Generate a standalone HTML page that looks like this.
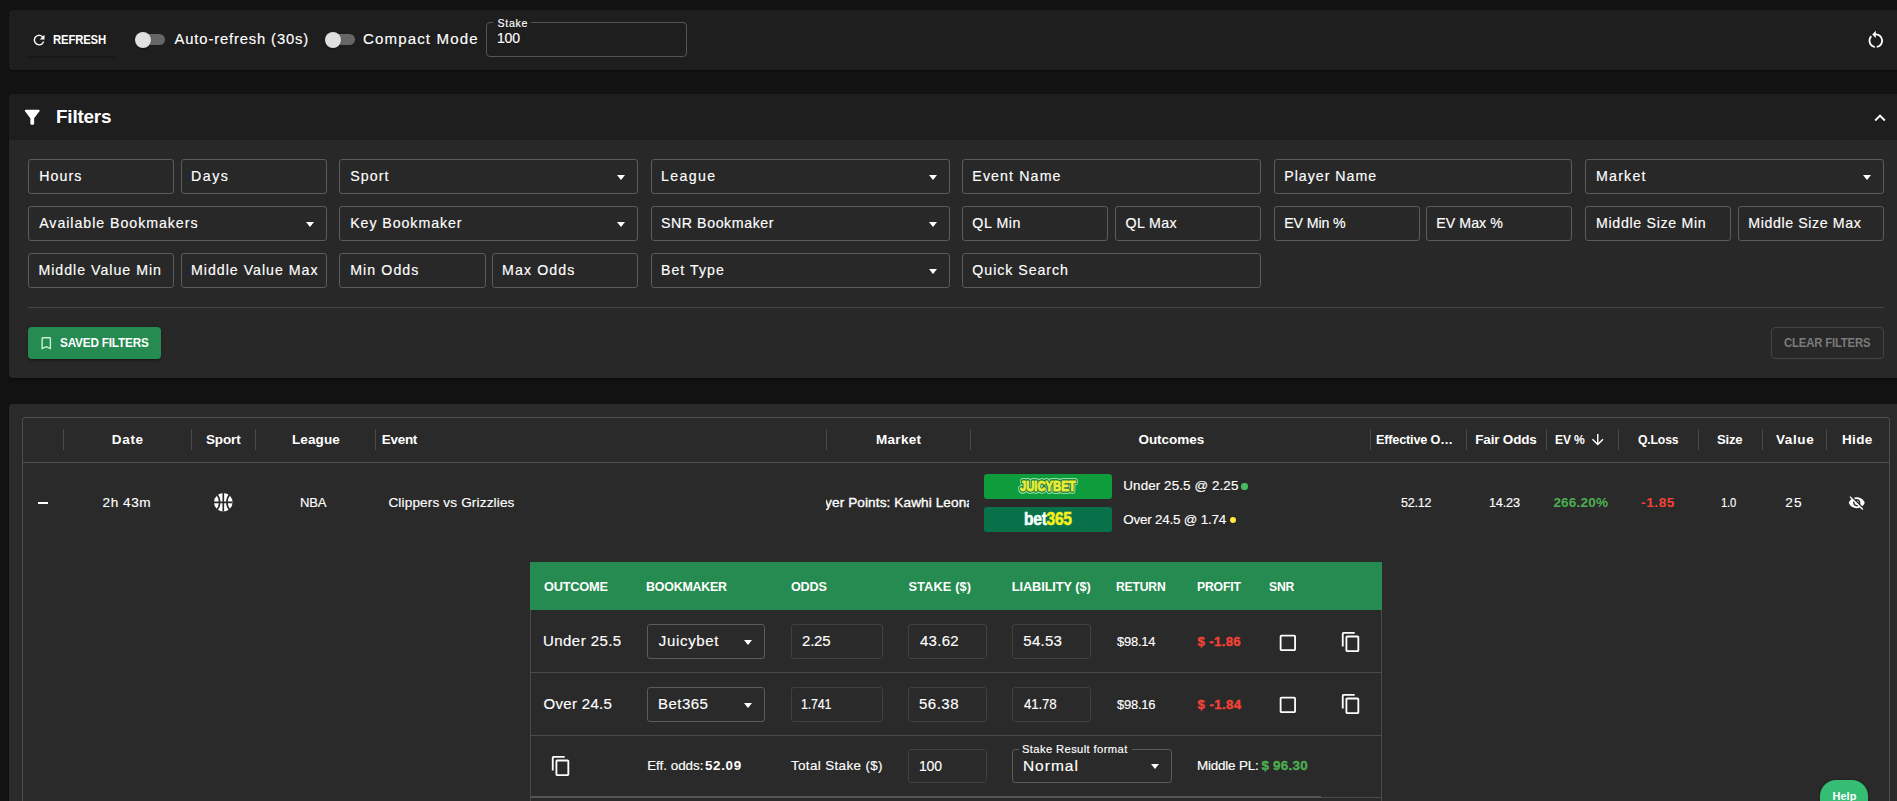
<!DOCTYPE html>
<html><head><meta charset="utf-8"><style>
html,body{margin:0;padding:0;}
body{width:1897px;height:801px;overflow:hidden;background:#121212;position:relative;font-family:"Liberation Sans",sans-serif;}
.b{position:absolute;}
.i{position:absolute;overflow:visible;}
.t{position:absolute;white-space:nowrap;line-height:1;transform-origin:0 0;}
.tri{position:absolute;width:0;height:0;border-left:4.5px solid transparent;border-right:4.5px solid transparent;border-top:5px solid #fff;}
</style></head><body>
<div class="b" style="left:9px;top:10px;width:1900px;height:60px;background:#1e1e1e;border-radius:4px;box-shadow:0 2px 1px -1px rgba(0,0,0,.2),0 1px 1px 0 rgba(0,0,0,.14),0 1px 3px 0 rgba(0,0,0,.12);"></div>
<div class="b" style="left:25px;top:23px;width:92px;height:33px;border-radius:4px;box-shadow:0 2px 2px -1px rgba(0,0,0,.35);"></div>
<svg class="i" style="left:31.1px;top:31.6px" width="16.2" height="16.2" viewBox="0 0 24 24"><path fill="#fff" d="M17.65 6.35C16.2 4.9 14.21 4 12 4c-4.42 0-7.99 3.58-7.99 8s3.57 8 7.99 8c3.73 0 6.84-2.55 7.73-6h-2.08c-.82 2.33-3.04 4-5.65 4-3.31 0-6-2.69-6-6s2.69-6 6-6c1.66 0 3.14.69 4.22 1.78L13 11h7V4l-2.35 2.35z"/></svg>
<div class="b" style="left:138px;top:34px;width:27px;height:11px;background:#666;border-radius:5.5px;"></div>
<div class="b" style="left:135px;top:32px;width:16px;height:16px;background:#e0e0e0;border-radius:50%;box-shadow:0 2px 1px -1px rgba(0,0,0,.2),0 1px 1px 0 rgba(0,0,0,.14),0 1px 3px 0 rgba(0,0,0,.12);"></div>
<div class="b" style="left:328px;top:34px;width:27px;height:11px;background:#666;border-radius:5.5px;"></div>
<div class="b" style="left:325px;top:32px;width:16px;height:16px;background:#e0e0e0;border-radius:50%;box-shadow:0 2px 1px -1px rgba(0,0,0,.2),0 1px 1px 0 rgba(0,0,0,.14),0 1px 3px 0 rgba(0,0,0,.12);"></div>
<div class="b" style="left:486px;top:22px;width:201px;height:35px;border:1px solid #555;border-radius:4px;box-sizing:border-box;"></div>
<div class="b" style="left:493px;top:20px;width:38px;height:4px;background:#1e1e1e;"></div>
<svg class="i" style="left:1864.8px;top:29px" width="21.6" height="21.6" viewBox="0 0 24 24"><path fill="#fff" d="M12 5V2L8 6l4 4V7c3.31 0 6 2.69 6 6 0 2.97-2.17 5.43-5 5.91v2.02c3.95-.49 7-3.85 7-7.93 0-4.42-3.58-8-8-8zm-6 8c0-1.65.67-3.15 1.76-4.24L6.34 7.34C4.9 8.79 4 10.79 4 13c0 4.08 3.05 7.44 7 7.93v-2.02c-2.83-.48-5-2.94-5-5.91z"/></svg>
<div class="b" style="left:9px;top:94px;width:1900px;height:284px;background:#282828;border-radius:4px;overflow:hidden;box-shadow:0 2px 1px -1px rgba(0,0,0,.2),0 1px 1px 0 rgba(0,0,0,.14),0 1px 3px 0 rgba(0,0,0,.12);"></div>
<div class="b" style="left:9px;top:94px;width:1900px;height:46px;background:#1e1e1e;border-radius:4px 4px 0 0;"></div>
<svg class="i" style="left:21.45px;top:106.25px" width="22.5" height="22.5" viewBox="0 0 24 24"><path fill="#fff" d="M4.25 5.61C6.27 8.2 10 13 10 13v6c0 .55.45 1 1 1h2c.55 0 1-.45 1-1v-6s3.72-4.8 5.74-7.39c.51-.66.04-1.61-.79-1.61H5.04c-.83 0-1.3.95-.79 1.61z"/></svg>
<svg class="i" style="left:1868.9px;top:106.7px" width="22" height="22" viewBox="0 0 24 24"><path fill="#fff" d="m12 8-6 6 1.41 1.41L12 10.83l4.59 4.58L18 14z"/></svg>
<div class="b" style="left:28px;top:159px;width:146px;height:35px;border:1px solid #5b5b5b;border-radius:3px;box-sizing:border-box;"></div>
<div class="b" style="left:181px;top:159px;width:146px;height:35px;border:1px solid #5b5b5b;border-radius:3px;box-sizing:border-box;"></div>
<div class="b" style="left:339px;top:159px;width:299px;height:35px;border:1px solid #5b5b5b;border-radius:3px;box-sizing:border-box;"></div>
<div class="tri" style="left:616.5px;top:174.5px"></div>
<div class="b" style="left:651px;top:159px;width:299px;height:35px;border:1px solid #5b5b5b;border-radius:3px;box-sizing:border-box;"></div>
<div class="tri" style="left:928.5px;top:174.5px"></div>
<div class="b" style="left:962px;top:159px;width:299px;height:35px;border:1px solid #5b5b5b;border-radius:3px;box-sizing:border-box;"></div>
<div class="b" style="left:1274px;top:159px;width:298px;height:35px;border:1px solid #5b5b5b;border-radius:3px;box-sizing:border-box;"></div>
<div class="b" style="left:1585px;top:159px;width:299px;height:35px;border:1px solid #5b5b5b;border-radius:3px;box-sizing:border-box;"></div>
<div class="tri" style="left:1862.5px;top:174.5px"></div>
<div class="b" style="left:28px;top:206px;width:299px;height:35px;border:1px solid #5b5b5b;border-radius:3px;box-sizing:border-box;"></div>
<div class="tri" style="left:305.5px;top:221.5px"></div>
<div class="b" style="left:339px;top:206px;width:299px;height:35px;border:1px solid #5b5b5b;border-radius:3px;box-sizing:border-box;"></div>
<div class="tri" style="left:616.5px;top:221.5px"></div>
<div class="b" style="left:651px;top:206px;width:299px;height:35px;border:1px solid #5b5b5b;border-radius:3px;box-sizing:border-box;"></div>
<div class="tri" style="left:928.5px;top:221.5px"></div>
<div class="b" style="left:962px;top:206px;width:146px;height:35px;border:1px solid #5b5b5b;border-radius:3px;box-sizing:border-box;"></div>
<div class="b" style="left:1115px;top:206px;width:146px;height:35px;border:1px solid #5b5b5b;border-radius:3px;box-sizing:border-box;"></div>
<div class="b" style="left:1274px;top:206px;width:146px;height:35px;border:1px solid #5b5b5b;border-radius:3px;box-sizing:border-box;"></div>
<div class="b" style="left:1426px;top:206px;width:146px;height:35px;border:1px solid #5b5b5b;border-radius:3px;box-sizing:border-box;"></div>
<div class="b" style="left:1585px;top:206px;width:146px;height:35px;border:1px solid #5b5b5b;border-radius:3px;box-sizing:border-box;"></div>
<div class="b" style="left:1738px;top:206px;width:146px;height:35px;border:1px solid #5b5b5b;border-radius:3px;box-sizing:border-box;"></div>
<div class="b" style="left:28px;top:253px;width:146px;height:35px;border:1px solid #5b5b5b;border-radius:3px;box-sizing:border-box;"></div>
<div class="b" style="left:181px;top:253px;width:146px;height:35px;border:1px solid #5b5b5b;border-radius:3px;box-sizing:border-box;"></div>
<div class="b" style="left:339px;top:253px;width:147px;height:35px;border:1px solid #5b5b5b;border-radius:3px;box-sizing:border-box;"></div>
<div class="b" style="left:492px;top:253px;width:146px;height:35px;border:1px solid #5b5b5b;border-radius:3px;box-sizing:border-box;"></div>
<div class="b" style="left:651px;top:253px;width:299px;height:35px;border:1px solid #5b5b5b;border-radius:3px;box-sizing:border-box;"></div>
<div class="tri" style="left:928.5px;top:268.5px"></div>
<div class="b" style="left:962px;top:253px;width:299px;height:35px;border:1px solid #5b5b5b;border-radius:3px;box-sizing:border-box;"></div>
<div class="b" style="left:28px;top:307px;width:1856px;height:1px;background:#474747;"></div>
<div class="b" style="left:28px;top:327px;width:133px;height:32px;background:#258b51;border-radius:4px;box-shadow:0 3px 1px -2px rgba(0,0,0,.2),0 2px 2px 0 rgba(0,0,0,.14),0 1px 5px 0 rgba(0,0,0,.12);"></div>
<svg class="i" style="left:37.56px;top:334.94px" width="16.5" height="16.5" viewBox="0 0 24 24"><path fill="#c9f3d4" d="M17 3H7c-1.1 0-1.99.9-1.99 2L5 21l7-3 7 3V5c0-1.1-.9-2-2-2zm0 15-5-2.18L7 18V5h10v13z"/></svg>
<div class="b" style="left:1771px;top:327px;width:113px;height:32px;border:1px solid #444;border-radius:4px;box-sizing:border-box;"></div>
<div class="b" style="left:9px;top:404px;width:1900px;height:420px;background:#2a2a2a;border-radius:4px;box-shadow:0 2px 1px -1px rgba(0,0,0,.2),0 1px 1px 0 rgba(0,0,0,.14),0 1px 3px 0 rgba(0,0,0,.12);"></div>
<div class="b" style="left:22px;top:417px;width:1868px;height:420px;border:1px solid #4e4e4e;border-radius:3px;box-sizing:border-box;"></div>
<div class="b" style="left:22px;top:462px;width:1868px;height:1px;background:#4e4e4e;"></div>
<div class="b" style="left:63px;top:429px;width:1px;height:21px;background:#4a4a4a;"></div>
<div class="b" style="left:191px;top:429px;width:1px;height:21px;background:#4a4a4a;"></div>
<div class="b" style="left:255px;top:429px;width:1px;height:21px;background:#4a4a4a;"></div>
<div class="b" style="left:375px;top:429px;width:1px;height:21px;background:#4a4a4a;"></div>
<div class="b" style="left:826px;top:429px;width:1px;height:21px;background:#4a4a4a;"></div>
<div class="b" style="left:970px;top:429px;width:1px;height:21px;background:#4a4a4a;"></div>
<div class="b" style="left:1370px;top:429px;width:1px;height:21px;background:#4a4a4a;"></div>
<div class="b" style="left:1466px;top:429px;width:1px;height:21px;background:#4a4a4a;"></div>
<div class="b" style="left:1546px;top:429px;width:1px;height:21px;background:#4a4a4a;"></div>
<div class="b" style="left:1618px;top:429px;width:1px;height:21px;background:#4a4a4a;"></div>
<div class="b" style="left:1698px;top:429px;width:1px;height:21px;background:#4a4a4a;"></div>
<div class="b" style="left:1762px;top:429px;width:1px;height:21px;background:#4a4a4a;"></div>
<div class="b" style="left:1826px;top:429px;width:1px;height:21px;background:#4a4a4a;"></div>
<svg class="i" style="left:1589.1px;top:430.9px" width="17.5" height="17.5" viewBox="0 0 24 24"><path fill="#fff" d="M20 12l-1.41-1.41L13 16.17V4h-2v12.17l-5.58-5.59L4 12l8 8 8-8z"/></svg>
<div class="b" style="left:38px;top:502px;width:10px;height:2px;background:#fff;"></div>
<svg class="i" style="left:213.5px;top:493.1px" width="18.6" height="18.6" viewBox="0 0 20 20"><circle cx="10" cy="10" r="10" fill="#fff"/><g fill="none" stroke="#2a2a2a" stroke-width="1.8"><path d="M10 0V20M0 10H20"/><path d="M3 2.2C7 5 7 15 3 17.8"/><path d="M17 2.2C13 5 13 15 17 17.8"/></g></svg>
<div class="b" style="left:826px;top:490px;width:143px;height:24px;overflow:hidden"><span class="t" style="left:-0.9px;top:6.1px;font-size:13.6px;letter-spacing:0.1px;-webkit-text-stroke:0.35px #fff;color:#fff">yer Points: Kawhi Leonard</span></div>
<div class="b" style="left:984px;top:474px;width:128px;height:25px;background:#0f9c3d;border-radius:3px;"></div>
<svg class="i" style="left:1012px;top:474px" width="72" height="25" viewBox="0 0 72 25"><g font-family="Liberation Sans" font-weight="bold" font-size="14.6" stroke-linejoin="round"><text x="8" y="17.0" textLength="55.6" lengthAdjust="spacingAndGlyphs" fill="#9ff0b4" stroke="#9ff0b4" stroke-width="5.4">JUICYBET</text><text x="8" y="17.0" textLength="55.6" lengthAdjust="spacingAndGlyphs" fill="#0a6a2a" stroke="#0a6a2a" stroke-width="3.3">JUICYBET</text><text x="8" y="17.0" textLength="55.6" lengthAdjust="spacingAndGlyphs" fill="#e9ec3a" stroke="#e9ec3a" stroke-width="1.1">JUICYBET</text></g></svg>
<div class="b" style="left:984px;top:507px;width:128px;height:25px;background:#08714a;border-radius:3px;"></div>
<span class="t" style="left:1023.5px;top:510.6px;font-size:17.7px;font-weight:bold;color:#f4fffa;letter-spacing:-0.3px;transform:scaleX(0.88);-webkit-text-stroke:0.6px currentColor">bet<span style="color:#f5ef1e">365</span></span>
<div class="b" style="left:1241.3px;top:483.3px;width:6.4px;height:6.4px;background:#43bd5e;border-radius:50%;"></div>
<div class="b" style="left:1229.9px;top:516.6px;width:6.4px;height:6.4px;background:#ffeb3b;border-radius:50%;"></div>
<svg class="i" style="left:1848.3px;top:493.8px" width="17.5" height="17.5" viewBox="0 0 24 24"><path fill="#fff" d="M12 7c2.76 0 5 2.24 5 5 0 .65-.13 1.26-.36 1.83l2.92 2.92c1.51-1.26 2.7-2.89 3.43-4.75-1.73-4.39-6-7.5-11-7.5-1.4 0-2.74.25-3.98.7l2.16 2.16C10.74 7.13 11.35 7 12 7zM2 4.27l2.28 2.28.46.46C3.08 8.3 1.78 10.02 1 12c1.73 4.39 6 7.5 11 7.5 1.55 0 3.03-.3 4.38-.84l.42.42L19.73 22 21 20.73 3.27 3 2 4.27zM7.53 9.8l1.55 1.55c-.05.21-.08.43-.08.65 0 1.66 1.34 3 3 3 .22 0 .44-.03.65-.08l1.55 1.55c-.67.33-1.41.53-2.2.53-2.76 0-5-2.24-5-5 0-.79.2-1.53.53-2.2zm4.31-.78 3.15 3.15.02-.16c0-1.66-1.34-3-3-3l-.17.01z"/></svg>
<div class="b" style="left:530px;top:562px;width:852px;height:240px;border:1px solid #4a4a4a;border-top:none;box-sizing:border-box;"></div>
<div class="b" style="left:530px;top:562px;width:852px;height:48px;background:#268b50;"></div>
<div class="b" style="left:531px;top:672px;width:850px;height:1px;background:#4a4a4a;"></div>
<div class="b" style="left:531px;top:735px;width:850px;height:1px;background:#4a4a4a;"></div>
<div class="b" style="left:531px;top:796px;width:790px;height:2px;background:#555;"></div>
<div class="b" style="left:1321px;top:797px;width:60px;height:1px;background:#4a4a4a;"></div>
<div class="b" style="left:647px;top:624px;width:118px;height:35px;border:1px solid #5b5b5b;border-radius:3px;box-sizing:border-box;"></div>
<div class="tri" style="left:743.8px;top:639.5px"></div>
<div class="b" style="left:791px;top:624px;width:92px;height:35px;border:1px solid #404040;border-radius:3px;box-sizing:border-box;"></div>
<div class="b" style="left:908px;top:624px;width:79px;height:35px;border:1px solid #404040;border-radius:3px;box-sizing:border-box;"></div>
<div class="b" style="left:1012px;top:624px;width:79px;height:35px;border:1px solid #404040;border-radius:3px;box-sizing:border-box;"></div>
<div class="b" style="left:647px;top:687px;width:118px;height:35px;border:1px solid #5b5b5b;border-radius:3px;box-sizing:border-box;"></div>
<div class="tri" style="left:743.8px;top:702.5px"></div>
<div class="b" style="left:791px;top:687px;width:92px;height:35px;border:1px solid #404040;border-radius:3px;box-sizing:border-box;"></div>
<div class="b" style="left:908px;top:687px;width:79px;height:35px;border:1px solid #404040;border-radius:3px;box-sizing:border-box;"></div>
<div class="b" style="left:1012px;top:687px;width:79px;height:35px;border:1px solid #404040;border-radius:3px;box-sizing:border-box;"></div>
<svg class="i" style="left:1276.9px;top:631.5px" width="21.7" height="21.7" viewBox="0 0 24 24"><path fill="#fff" d="M19 5v14H5V5h14m0-2H5c-1.1 0-2 .9-2 2v14c0 1.1.9 2 2 2h14c1.1 0 2-.9 2-2V5c0-1.1-.9-2-2-2z"/></svg>
<svg class="i" style="left:1340px;top:631px" width="22" height="22" viewBox="0 0 24 24"><path fill="#fff" d="M16 1H4c-1.1 0-2 .9-2 2v14h2V3h12V1zm3 4H8c-1.1 0-2 .9-2 2v14c0 1.1.9 2 2 2h11c1.1 0 2-.9 2-2V7c0-1.1-.9-2-2-2zm0 16H8V7h11v14z"/></svg>
<svg class="i" style="left:1276.9px;top:693.5px" width="21.7" height="21.7" viewBox="0 0 24 24"><path fill="#fff" d="M19 5v14H5V5h14m0-2H5c-1.1 0-2 .9-2 2v14c0 1.1.9 2 2 2h14c1.1 0 2-.9 2-2V5c0-1.1-.9-2-2-2z"/></svg>
<svg class="i" style="left:1340px;top:693px" width="22" height="22" viewBox="0 0 24 24"><path fill="#fff" d="M16 1H4c-1.1 0-2 .9-2 2v14h2V3h12V1zm3 4H8c-1.1 0-2 .9-2 2v14c0 1.1.9 2 2 2h11c1.1 0 2-.9 2-2V7c0-1.1-.9-2-2-2zm0 16H8V7h11v14z"/></svg>
<svg class="i" style="left:549.9px;top:755.1px" width="22" height="22" viewBox="0 0 24 24"><path fill="#fff" d="M16 1H4c-1.1 0-2 .9-2 2v14h2V3h12V1zm3 4H8c-1.1 0-2 .9-2 2v14c0 1.1.9 2 2 2h11c1.1 0 2-.9 2-2V7c0-1.1-.9-2-2-2zm0 16H8V7h11v14z"/></svg>
<div class="b" style="left:908px;top:749px;width:79px;height:34px;border:1px solid #404040;border-radius:3px;box-sizing:border-box;"></div>
<div class="b" style="left:1012px;top:749px;width:160px;height:34px;border:1px solid #5b5b5b;border-radius:3px;box-sizing:border-box;"></div>
<div class="b" style="left:1019px;top:745px;width:113px;height:6px;background:#2a2a2a;"></div>
<div class="tri" style="left:1151px;top:764px"></div>
<div class="b" style="left:1820px;top:780px;width:48px;height:40px;background:#35bd74;border-radius:16px 16px 0 0;box-shadow:0 0 2px rgba(0,0,0,.6);"></div>
<span id="s0" class="t" style="left:52.70px;top:34.29px;font-size:12.90px;letter-spacing:-0.200px;transform:scaleX(0.8793);font-weight:bold;color:#ffffff;">REFRESH</span>
<span id="s1" class="t" style="left:174.60px;top:31.63px;font-size:14.78px;letter-spacing:0.859px;-webkit-text-stroke:0.15px currentColor;color:#ffffff;">Auto-refresh (30s)</span>
<span id="s2" class="t" style="left:363.00px;top:31.49px;font-size:15.07px;letter-spacing:1.127px;-webkit-text-stroke:0.15px currentColor;color:#ffffff;">Compact Mode</span>
<span id="s3" class="t" style="left:497.60px;top:17.99px;font-size:10.60px;letter-spacing:0.650px;-webkit-text-stroke:0.15px currentColor;color:#ffffff;">Stake</span>
<span id="s4" class="t" style="left:497.00px;top:30.28px;font-size:15.20px;letter-spacing:-0.200px;transform:scaleX(0.9243);-webkit-text-stroke:0.15px currentColor;color:#ffffff;">100</span>
<span id="s5" class="t" style="left:55.80px;top:107.92px;font-size:18.80px;letter-spacing:-0.200px;transform:scaleX(1.0057);font-weight:bold;color:#ffffff;">Filters</span>
<span id="s6" class="t" style="left:39.20px;top:168.93px;font-size:14.20px;letter-spacing:1.075px;-webkit-text-stroke:0.15px currentColor;color:#ffffff;">Hours</span>
<span id="s7" class="t" style="left:191.00px;top:168.93px;font-size:14.20px;letter-spacing:1.500px;-webkit-text-stroke:0.15px currentColor;color:#ffffff;">Days</span>
<span id="s8" class="t" style="left:350.20px;top:168.93px;font-size:14.20px;letter-spacing:1.100px;-webkit-text-stroke:0.15px currentColor;color:#ffffff;">Sport</span>
<span id="s9" class="t" style="left:660.90px;top:168.93px;font-size:14.20px;letter-spacing:1.400px;-webkit-text-stroke:0.15px currentColor;color:#ffffff;">League</span>
<span id="s10" class="t" style="left:972.30px;top:168.93px;font-size:14.20px;letter-spacing:1.122px;-webkit-text-stroke:0.15px currentColor;color:#ffffff;">Event Name</span>
<span id="s11" class="t" style="left:1284.20px;top:168.93px;font-size:14.20px;letter-spacing:0.990px;-webkit-text-stroke:0.15px currentColor;color:#ffffff;">Player Name</span>
<span id="s12" class="t" style="left:1596.00px;top:168.93px;font-size:14.20px;letter-spacing:1.220px;-webkit-text-stroke:0.15px currentColor;color:#ffffff;">Market</span>
<span id="s13" class="t" style="left:39.20px;top:215.93px;font-size:14.20px;letter-spacing:0.958px;-webkit-text-stroke:0.15px currentColor;color:#ffffff;">Available Bookmakers</span>
<span id="s14" class="t" style="left:350.20px;top:215.93px;font-size:14.20px;letter-spacing:0.933px;-webkit-text-stroke:0.15px currentColor;color:#ffffff;">Key Bookmaker</span>
<span id="s15" class="t" style="left:660.90px;top:215.93px;font-size:14.20px;letter-spacing:0.583px;-webkit-text-stroke:0.15px currentColor;color:#ffffff;">SNR Bookmaker</span>
<span id="s16" class="t" style="left:972.30px;top:215.93px;font-size:14.20px;letter-spacing:0.600px;-webkit-text-stroke:0.15px currentColor;color:#ffffff;">QL Min</span>
<span id="s17" class="t" style="left:1125.60px;top:215.93px;font-size:14.20px;letter-spacing:0.360px;-webkit-text-stroke:0.15px currentColor;color:#ffffff;">QL Max</span>
<span id="s18" class="t" style="left:1284.20px;top:215.93px;font-size:14.20px;letter-spacing:-0.114px;-webkit-text-stroke:0.15px currentColor;color:#ffffff;">EV Min %</span>
<span id="s19" class="t" style="left:1436.30px;top:215.93px;font-size:14.20px;letter-spacing:0.043px;-webkit-text-stroke:0.15px currentColor;color:#ffffff;">EV Max %</span>
<span id="s20" class="t" style="left:1596.00px;top:215.93px;font-size:14.20px;letter-spacing:0.679px;-webkit-text-stroke:0.15px currentColor;color:#ffffff;">Middle Size Min</span>
<span id="s21" class="t" style="left:1748.30px;top:215.93px;font-size:14.20px;letter-spacing:0.600px;-webkit-text-stroke:0.15px currentColor;color:#ffffff;">Middle Size Max</span>
<span id="s22" class="t" style="left:38.40px;top:262.93px;font-size:14.20px;letter-spacing:0.987px;-webkit-text-stroke:0.15px currentColor;color:#ffffff;">Middle Value Min</span>
<span id="s23" class="t" style="left:191.00px;top:262.93px;font-size:14.20px;letter-spacing:0.987px;-webkit-text-stroke:0.15px currentColor;color:#ffffff;">Middle Value Max</span>
<span id="s24" class="t" style="left:350.20px;top:262.93px;font-size:14.20px;letter-spacing:1.071px;-webkit-text-stroke:0.15px currentColor;color:#ffffff;">Min Odds</span>
<span id="s25" class="t" style="left:502.10px;top:262.93px;font-size:14.20px;letter-spacing:1.086px;-webkit-text-stroke:0.15px currentColor;color:#ffffff;">Max Odds</span>
<span id="s26" class="t" style="left:660.90px;top:262.93px;font-size:14.20px;letter-spacing:1.029px;-webkit-text-stroke:0.15px currentColor;color:#ffffff;">Bet Type</span>
<span id="s27" class="t" style="left:972.30px;top:262.93px;font-size:14.20px;letter-spacing:0.955px;-webkit-text-stroke:0.15px currentColor;color:#ffffff;">Quick Search</span>
<span id="s28" class="t" style="left:60.40px;top:336.76px;font-size:12.40px;letter-spacing:-0.200px;transform:scaleX(0.9493);font-weight:bold;color:#ffffff;">SAVED FILTERS</span>
<span id="s29" class="t" style="left:1784.20px;top:336.66px;font-size:12.40px;letter-spacing:-0.200px;transform:scaleX(0.9167);font-weight:bold;color:#7b7b7b;">CLEAR FILTERS</span>
<span id="s30" class="t" style="left:111.80px;top:432.82px;font-size:13.50px;letter-spacing:0.667px;font-weight:bold;color:#ffffff;">Date</span>
<span id="s31" class="t" style="left:206.00px;top:432.82px;font-size:13.50px;letter-spacing:-0.150px;font-weight:bold;color:#ffffff;">Sport</span>
<span id="s32" class="t" style="left:292.00px;top:432.82px;font-size:13.50px;letter-spacing:0.100px;font-weight:bold;color:#ffffff;">League</span>
<span id="s33" class="t" style="left:381.70px;top:432.82px;font-size:13.50px;letter-spacing:-0.275px;font-weight:bold;color:#ffffff;">Event</span>
<span id="s34" class="t" style="left:876.00px;top:432.82px;font-size:13.50px;letter-spacing:0.300px;font-weight:bold;color:#ffffff;">Market</span>
<span id="s35" class="t" style="left:1138.40px;top:432.82px;font-size:13.50px;letter-spacing:-0.014px;font-weight:bold;color:#ffffff;">Outcomes</span>
<span id="s36" class="t" style="left:1376.40px;top:432.82px;font-size:13.50px;letter-spacing:-0.200px;transform:scaleX(0.9398);font-weight:bold;color:#ffffff;">Effective O…</span>
<span id="s37" class="t" style="left:1475.30px;top:432.82px;font-size:13.50px;letter-spacing:-0.188px;font-weight:bold;color:#ffffff;">Fair Odds</span>
<span id="s38" class="t" style="left:1555.00px;top:432.82px;font-size:13.50px;letter-spacing:-0.200px;transform:scaleX(0.8951);font-weight:bold;color:#ffffff;">EV %</span>
<span id="s39" class="t" style="left:1638.20px;top:432.82px;font-size:13.50px;letter-spacing:-0.200px;transform:scaleX(0.9070);font-weight:bold;color:#ffffff;">Q.Loss</span>
<span id="s40" class="t" style="left:1717.00px;top:432.82px;font-size:13.50px;letter-spacing:-0.200px;transform:scaleX(0.9687);font-weight:bold;color:#ffffff;">Size</span>
<span id="s41" class="t" style="left:1776.00px;top:432.82px;font-size:13.50px;letter-spacing:0.600px;font-weight:bold;color:#ffffff;">Value</span>
<span id="s42" class="t" style="left:1842.00px;top:432.82px;font-size:13.50px;letter-spacing:0.333px;font-weight:bold;color:#ffffff;">Hide</span>
<span id="s43" class="t" style="left:102.60px;top:495.94px;font-size:13.60px;letter-spacing:0.520px;-webkit-text-stroke:0.15px currentColor;color:#ffffff;">2h 43m</span>
<span id="s44" class="t" style="left:300.00px;top:495.94px;font-size:13.60px;letter-spacing:-0.200px;transform:scaleX(0.9612);-webkit-text-stroke:0.15px currentColor;color:#ffffff;">NBA</span>
<span id="s45" class="t" style="left:388.40px;top:495.94px;font-size:13.60px;letter-spacing:0.145px;-webkit-text-stroke:0.15px currentColor;color:#ffffff;">Clippers vs Grizzlies</span>
<span id="s46" class="t" style="left:1401.30px;top:495.94px;font-size:13.60px;letter-spacing:-0.200px;transform:scaleX(0.9164);-webkit-text-stroke:0.15px currentColor;color:#ffffff;">52.12</span>
<span id="s47" class="t" style="left:1489.40px;top:495.94px;font-size:13.60px;letter-spacing:-0.200px;transform:scaleX(0.9317);-webkit-text-stroke:0.15px currentColor;color:#ffffff;">14.23</span>
<span id="s48" class="t" style="left:1553.40px;top:495.94px;font-size:13.60px;letter-spacing:0.167px;font-weight:bold;color:#4caf50;">266.20%</span>
<span id="s49" class="t" style="left:1641.00px;top:495.94px;font-size:13.60px;letter-spacing:0.600px;font-weight:bold;color:#f44336;">-1.85</span>
<span id="s50" class="t" style="left:1721.00px;top:495.94px;font-size:13.60px;letter-spacing:-0.200px;transform:scaleX(0.8248);-webkit-text-stroke:0.15px currentColor;color:#ffffff;">1.0</span>
<span id="s51" class="t" style="left:1785.20px;top:495.94px;font-size:13.60px;letter-spacing:1.200px;-webkit-text-stroke:0.15px currentColor;color:#ffffff;">25</span>
<span id="s52" class="t" style="left:1123.30px;top:478.81px;font-size:13.40px;letter-spacing:0.106px;-webkit-text-stroke:0.15px currentColor;color:#ffffff;">Under 25.5 @ 2.25</span>
<span id="s53" class="t" style="left:1123.30px;top:513.01px;font-size:13.40px;letter-spacing:-0.200px;-webkit-text-stroke:0.15px currentColor;color:#ffffff;">Over 24.5 @ 1.74</span>
<span id="s54" class="t" style="left:544.00px;top:581.17px;font-size:12.80px;letter-spacing:-0.200px;transform:scaleX(0.9969);font-weight:bold;color:#ffffff;">OUTCOME</span>
<span id="s55" class="t" style="left:646.40px;top:581.17px;font-size:12.80px;letter-spacing:-0.200px;transform:scaleX(0.9685);font-weight:bold;color:#ffffff;">BOOKMAKER</span>
<span id="s56" class="t" style="left:791.40px;top:581.17px;font-size:12.80px;letter-spacing:-0.200px;transform:scaleX(0.9862);font-weight:bold;color:#ffffff;">ODDS</span>
<span id="s57" class="t" style="left:908.40px;top:581.17px;font-size:12.80px;letter-spacing:0.138px;font-weight:bold;color:#ffffff;">STAKE ($)</span>
<span id="s58" class="t" style="left:1011.70px;top:581.17px;font-size:12.80px;letter-spacing:-0.092px;font-weight:bold;color:#ffffff;">LIABILITY ($)</span>
<span id="s59" class="t" style="left:1116.20px;top:581.17px;font-size:12.80px;letter-spacing:-0.200px;transform:scaleX(0.9492);font-weight:bold;color:#ffffff;">RETURN</span>
<span id="s60" class="t" style="left:1197.20px;top:581.17px;font-size:12.80px;letter-spacing:-0.200px;transform:scaleX(0.9556);font-weight:bold;color:#ffffff;">PROFIT</span>
<span id="s61" class="t" style="left:1269.20px;top:581.17px;font-size:12.80px;letter-spacing:-0.200px;transform:scaleX(0.9548);font-weight:bold;color:#ffffff;">SNR</span>
<span id="s62" class="t" style="left:543.00px;top:633.45px;font-size:15.00px;letter-spacing:0.444px;-webkit-text-stroke:0.15px currentColor;color:#ffffff;">Under 25.5</span>
<span id="s63" class="t" style="left:658.80px;top:633.45px;font-size:15.00px;letter-spacing:0.671px;-webkit-text-stroke:0.15px currentColor;color:#ffffff;">Juicybet</span>
<span id="s64" class="t" style="left:802.00px;top:633.45px;font-size:15.00px;letter-spacing:-0.200px;-webkit-text-stroke:0.15px currentColor;color:#ffffff;">2.25</span>
<span id="s65" class="t" style="left:920.00px;top:633.45px;font-size:15.00px;letter-spacing:0.275px;-webkit-text-stroke:0.15px currentColor;color:#ffffff;">43.62</span>
<span id="s66" class="t" style="left:1023.30px;top:633.45px;font-size:15.00px;letter-spacing:0.275px;-webkit-text-stroke:0.15px currentColor;color:#ffffff;">54.53</span>
<span id="s67" class="t" style="left:543.60px;top:695.75px;font-size:15.00px;letter-spacing:0.300px;-webkit-text-stroke:0.15px currentColor;color:#ffffff;">Over 24.5</span>
<span id="s68" class="t" style="left:657.90px;top:695.75px;font-size:15.00px;letter-spacing:0.500px;-webkit-text-stroke:0.15px currentColor;color:#ffffff;">Bet365</span>
<span id="s69" class="t" style="left:801.00px;top:695.75px;font-size:15.00px;letter-spacing:-0.200px;transform:scaleX(0.8297);-webkit-text-stroke:0.15px currentColor;color:#ffffff;">1.741</span>
<span id="s70" class="t" style="left:919.00px;top:695.75px;font-size:15.00px;letter-spacing:0.500px;-webkit-text-stroke:0.15px currentColor;color:#ffffff;">56.38</span>
<span id="s71" class="t" style="left:1023.90px;top:695.75px;font-size:15.00px;letter-spacing:-0.200px;transform:scaleX(0.8870);-webkit-text-stroke:0.15px currentColor;color:#ffffff;">41.78</span>
<span id="s72" class="t" style="left:1116.80px;top:635.48px;font-size:13.20px;letter-spacing:-0.200px;transform:scaleX(0.9797);-webkit-text-stroke:0.15px currentColor;color:#ffffff;">$98.14</span>
<span id="s73" class="t" style="left:1197.60px;top:635.48px;font-size:13.20px;letter-spacing:0.333px;font-weight:bold;color:#f44336;-webkit-text-stroke:0.35px currentColor;">$ -1.86</span>
<span id="s74" class="t" style="left:1116.80px;top:697.88px;font-size:13.20px;letter-spacing:-0.200px;transform:scaleX(0.9797);-webkit-text-stroke:0.15px currentColor;color:#ffffff;">$98.16</span>
<span id="s75" class="t" style="left:1197.60px;top:697.88px;font-size:13.20px;letter-spacing:0.417px;font-weight:bold;color:#f44336;-webkit-text-stroke:0.35px currentColor;">$ -1.84</span>
<span id="s76" class="t" style="left:647.20px;top:759.01px;font-size:13.40px;letter-spacing:-0.011px;-webkit-text-stroke:0.15px currentColor;color:#ffffff;">Eff. odds:</span>
<span id="s77" class="t" style="left:704.90px;top:759.01px;font-size:13.40px;letter-spacing:0.700px;font-weight:bold;color:#ffffff;">52.09</span>
<span id="s78" class="t" style="left:790.90px;top:759.01px;font-size:13.40px;letter-spacing:0.379px;-webkit-text-stroke:0.15px currentColor;color:#ffffff;">Total Stake ($)</span>
<span id="s79" class="t" style="left:918.80px;top:757.70px;font-size:15.00px;letter-spacing:-0.200px;transform:scaleX(0.9322);-webkit-text-stroke:0.15px currentColor;color:#ffffff;">100</span>
<span id="s80" class="t" style="left:1022.00px;top:744.28px;font-size:11.20px;letter-spacing:0.389px;-webkit-text-stroke:0.15px currentColor;color:#ffffff;">Stake Result format</span>
<span id="s81" class="t" style="left:1022.90px;top:758.33px;font-size:15.50px;letter-spacing:1.020px;-webkit-text-stroke:0.15px currentColor;color:#ffffff;">Normal</span>
<span id="s82" class="t" style="left:1197.40px;top:759.01px;font-size:13.40px;letter-spacing:-0.200px;transform:scaleX(1.0035);-webkit-text-stroke:0.15px currentColor;color:#ffffff;">Middle PL:</span>
<span id="s83" class="t" style="left:1261.40px;top:759.01px;font-size:13.40px;letter-spacing:0.283px;font-weight:bold;color:#4caf50;-webkit-text-stroke:0.35px currentColor;">$ 96.30</span>
<span id="s84" class="t" style="left:1832.40px;top:791.45px;font-size:11.00px;letter-spacing:0.067px;font-weight:bold;color:#ffffff;">Help</span>
</body></html>
